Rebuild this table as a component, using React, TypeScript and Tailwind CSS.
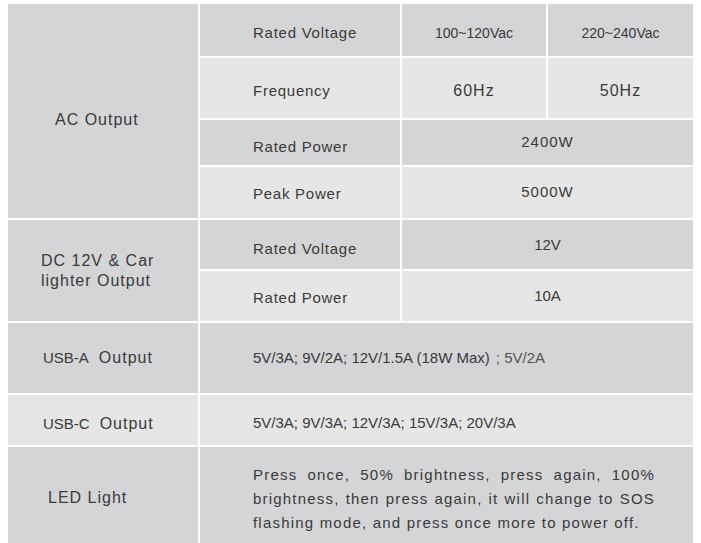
import React from 'react';

type CellProps = {
  dark?: boolean;
  className?: string;
  children?: React.ReactNode;
};

const Cell = ({ dark, className = '', children }: CellProps) => (
  <div className={`flex items-center ${dark ? 'bg-[#d4d5d7]' : 'bg-[#e6e6e6]'} ${className}`}>
    {children}
  </div>
);

const groupText = 'text-[16px] tracking-[1px] text-[#3a3a3a]';
const labelText = 'pl-[53px] text-[15px] tracking-[0.75px] text-[#3a3a3a]';

const App = () => {
  return (
    <div className="min-h-[543px] bg-white font-['Liberation_Sans',Arial,sans-serif] text-[#3a3a3a]">
      <div className="grid w-fit grid-cols-[190px_200px_144px_145px] grid-rows-[52px_60px_45px_51px_49px_50px_70px_50px_96px] gap-[2px] pl-2 pt-1">
        {/* AC Output */}
        <Cell dark className={`row-span-4 pl-[47px] pt-[18px] ${groupText}`}>AC Output</Cell>
        <Cell dark className={`pt-[6px] ${labelText}`}>Rated Voltage</Cell>
        <Cell dark className="justify-center pt-[6px] text-[14px]">100~120Vac</Cell>
        <Cell dark className="justify-center pt-[6px] text-[14px]">220~240Vac</Cell>

        <Cell className={`pt-[6px] ${labelText}`}>Frequency</Cell>
        <Cell className="justify-center pt-[5px] text-[16px] tracking-[1px]">60Hz</Cell>
        <Cell className="justify-center pt-[5px] text-[16px] tracking-[1px]">50Hz</Cell>

        <Cell dark className={`pt-[9px] ${labelText}`}>Rated Power</Cell>
        <Cell dark className="col-span-2 justify-center text-[15px] tracking-[1px]">2400W</Cell>

        <Cell className={`pt-[3px] ${labelText}`}>Peak Power</Cell>
        <Cell className="col-span-2 justify-center text-[15px] tracking-[1px]">5000W</Cell>

        {/* DC 12V */}
        <Cell dark className={`row-span-2 pl-[33px] leading-[20px] ${groupText}`}>
          <div>
            DC 12V &amp; Car
            <br />
            lighter Output
          </div>
        </Cell>
        <Cell dark className={`pt-[10px] ${labelText}`}>Rated Voltage</Cell>
        <Cell dark className="col-span-2 justify-center pt-[2px] text-[15px]">12V</Cell>

        <Cell className={`pt-[4px] ${labelText}`}>Rated Power</Cell>
        <Cell className="col-span-2 justify-center text-[15px]">10A</Cell>

        {/* USB-A */}
        <Cell dark className="pl-[35px]">
          <span className="text-[15px]">USB-A</span>
          <span className={`ml-[10px] ${groupText}`}>Output</span>
        </Cell>
        <Cell dark className="col-span-3 pl-[53px] text-[15px]">
          5V/3A; 9V/2A; 12V/1.5A (18W Max)
          <span className="ml-[6px] text-[#555555]">; 5V/2A</span>
        </Cell>

        {/* USB-C */}
        <Cell className="pl-[35px] pt-[8px]">
          <span className="text-[15px]">USB-C</span>
          <span className={`ml-[10px] ${groupText}`}>Output</span>
        </Cell>
        <Cell className="col-span-3 pl-[53px] pt-[6px] text-[15px]">
          5V/3A; 9V/3A; 12V/3A; 15V/3A; 20V/3A
        </Cell>

        {/* LED Light */}
        <Cell dark className={`pl-[40px] pt-[6px] ${groupText}`}>LED Light</Cell>
        <Cell dark className="col-span-3 items-start pl-[53px] pt-4">
          <div className="w-[402px] text-[15px] leading-[24px] tracking-[1.2px]">
            <div className="text-justify [text-align-last:justify]">Press once, 50% brightness, press again, 100%</div>
            <div className="text-justify [text-align-last:justify]">brightness, then press again, it will change to SOS</div>
            <div>flashing mode, and press once more to power off.</div>
          </div>
        </Cell>
      </div>
    </div>
  );
};

export default App;
